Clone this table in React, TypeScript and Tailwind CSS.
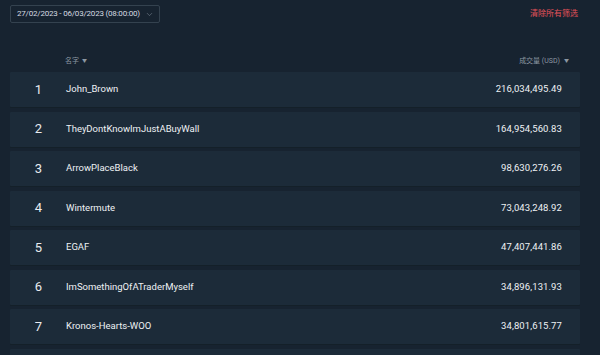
import { ChevronDown } from 'lucide-react';

const rows = [
  { rank: 1, name: 'John_Brown', volume: '216,034,495.49' },
  { rank: 2, name: 'TheyDontKnowImJustABuyWall', volume: '164,954,560.83' },
  { rank: 3, name: 'ArrowPlaceBlack', volume: '98,630,276.26' },
  { rank: 4, name: 'Wintermute', volume: '73,043,248.92' },
  { rank: 5, name: 'EGAF', volume: '47,407,441.86' },
  { rank: 6, name: 'ImSomethingOfATraderMyself', volume: '34,896,131.93' },
  { rank: 7, name: 'Kronos-Hearts-WOO', volume: '34,801,615.77' },
];

export default function App() {
  return (
    <div
      className="w-[600px] h-[355px] overflow-hidden bg-[#172330] text-[#e6eaee]"
      style={{ fontFamily: 'Roboto, "Noto Sans CJK SC", sans-serif' }}
    >
      {/* top bar */}
      <div className="flex items-center justify-between pl-[10px] pr-[22px] pt-[5px]">
        <button className="flex h-[18px] w-[150px] items-center gap-[5px] whitespace-nowrap rounded-[2px] border border-[#34424f] pl-[6px] text-[8px] tracking-[-0.2px] text-[#d5dae0]">
          <span>27/02/2023 - 06/03/2023 (08:00:00)</span>
          <ChevronDown className="h-[9px] w-[9px] text-[#7d8894]" strokeWidth={1.5} />
        </button>
        <span className="text-[8px] text-[#e4525a]">清除所有筛选</span>
      </div>

      {/* header */}
      <div className="mt-[33px] flex h-[10px] items-center justify-between pl-[65px] pr-[31px] text-[7px] text-[#8c97a2]">
        <span className="flex items-center gap-[3px]">
          名字
          <span className="text-[5px]">▼</span>
        </span>
        <span className="flex items-center gap-[4px]">
          成交量 (USD)
          <span className="text-[5px]">▼</span>
        </span>
      </div>

      {/* rows */}
      <div className="mt-[6px] flex flex-col gap-[4.5px] pl-[10px] pr-[20px]">
        {rows.map((r) => (
          <div
            key={r.rank}
            className="flex h-[35px] shrink-0 items-center rounded-[1px] bg-[#1c2b39] shadow-[0_1px_0_#142029]"
          >
            <span className="w-[56px] pl-[1px] text-center text-[13px] text-[#e8ecf0]">{r.rank}</span>
            <span className="flex-1 text-[9.5px] text-[#eef1f4]">{r.name}</span>
            <span className="pr-[18px] text-[9.5px] tracking-[0.1px] text-[#eef1f4]">{r.volume}</span>
          </div>
        ))}
        <div className="h-[35px] shrink-0 rounded-[1px] bg-[#1c2b39]" />
      </div>
    </div>
  );
}
